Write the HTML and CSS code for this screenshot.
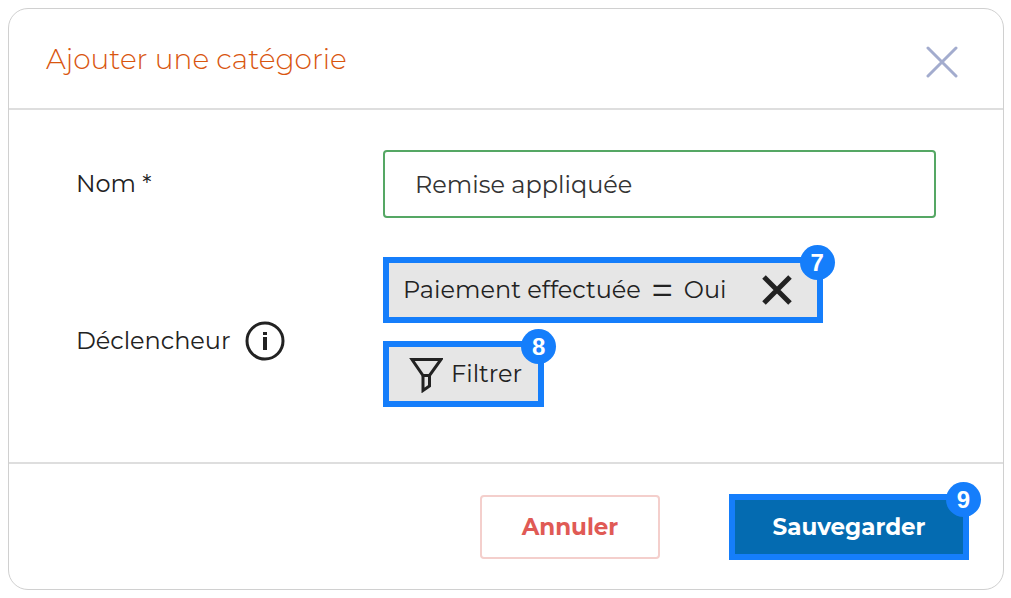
FILE: index.html
```html
<!DOCTYPE html>
<html lang="fr">
<head>
    <meta charset="UTF-8">
    <meta name="viewport" content="width=device-width, initial-scale=1.0">
    <title>Ajouter une catégorie</title>
    <link rel="stylesheet" href="styles.css">
</head>
<body>
    <form class="modal">
        <header class="modal-header">
            <h1 class="modal-title">Ajouter une catégorie</h1>
            <button type="button" class="icon-btn close-btn" aria-label="Fermer">
                <svg width="32" height="32" viewBox="0 0 32 32"><path d="M2 2L30 30M30 2L2 30" /></svg>
            </button>
        </header>

        <div class="modal-body">
            <label class="label" for="nom">Nom *</label>
            <input class="text-input" type="text" id="nom" value="Remise appliquée">

            <div class="label">
                <span>Déclencheur</span>
                <svg class="info-icon" width="40" height="40" viewBox="0 0 40 40">
                    <circle cx="20" cy="20" r="18" />
                    <path d="M20 16V29" />
                    <path d="M20 11V14" />
                </svg>
            </div>
            <div class="triggers">
                <div class="trigger highlight">
                    <span>Paiement effectuée</span>
                    <span class="operator">=</span>
                    <span>Oui</span>
                    <button type="button" class="icon-btn remove-btn" aria-label="Supprimer">
                        <svg width="30" height="30" viewBox="0 0 30 30"><path d="M2 2L28 28M28 2L2 28" /></svg>
                    </button>
                    <span class="badge">7</span>
                </div>
                <button type="button" class="filter-btn highlight">
                    <svg class="filter-icon" width="34" height="38" viewBox="0 0 34 38">
                        <path d="M3 4.500H32L20.500 20.500H14Z" />
                        <path d="M14 20.500V35.500L20.500 31V20.500" />
                    </svg>
                    Filtrer
                    <span class="badge">8</span>
                </button>
            </div>
        </div>

        <footer class="modal-footer">
            <button type="button" class="btn btn-cancel">Annuler</button>
            <button type="submit" class="btn btn-save highlight">Sauvegarder<span class="badge">9</span></button>
        </footer>
    </form>
</body>
</html>
```
FILE: styles.css
```css
* {
    margin: 0;
    padding: 0;
    box-sizing: border-box;
}

body {
    padding: 8px 7px 8px 8px;
    font-family: Montserrat, Inter, sans-serif;
    font-size: 24px;
    line-height: 32px;
    color: #222;
    background: #fff;
}

button,
input {
    font: inherit;
    color: inherit;
}

button {
    cursor: pointer;
}

svg {
    display: block;
    flex: none;
    fill: none;
    stroke: currentColor;
}

.modal {
    border: 1px solid #d0d0d0;
    border-radius: 20px;
}

/* Header */
.modal-header {
    display: flex;
    justify-content: space-between;
    align-items: center;
    padding: 32px 45px 30px 37px;
    border-bottom: 2px solid #dedede;
}

.modal-title {
    font-size: 28px;
    font-weight: 300;
    line-height: 37px;
    color: #d9560f;
}

.icon-btn {
    display: flex;
    border: none;
    background: none;
}

.close-btn {
    padding-top: 5px;
    color: #a3acce;
}

.close-btn svg {
    stroke-width: 3;
    stroke-linecap: round;
}

/* Body */
.modal-body {
    display: grid;
    grid-template-columns: 307px 1fr;
    align-items: center;
    row-gap: 39px;
    padding: 40px 67px 37px 67px;
}

.label {
    display: flex;
    align-items: center;
    gap: 14px;
}

.info-icon {
    stroke-width: 3;
}

.info-icon path {
    stroke-width: 4;
}

.text-input {
    width: 100%;
    height: 68px;
    padding: 0 30px;
    border: 2px solid #55a764;
    border-radius: 4px;
    color: #333;
    background: #fff;
    outline: none;
}

.triggers {
    display: flex;
    flex-direction: column;
    align-items: flex-start;
}

.highlight {
    position: relative;
    height: 66px;
    border: 6px solid #157efb;
}

.trigger,
.filter-btn {
    display: flex;
    align-items: center;
    margin-bottom: 18px;
    background: #e6e6e6;
}

.trigger {
    gap: 10px;
    padding: 0 25px 0 14px;
}

.operator {
    font-size: 40px;
}

.remove-btn {
    margin-left: 25px;
}

.remove-btn svg {
    stroke-width: 5;
}

.filter-btn {
    gap: 8px;
    padding: 0 16px 0 20px;
}

.filter-icon {
    stroke-width: 3;
}

.badge {
    position: absolute;
    top: -18px;
    right: -18px;
    width: 35px;
    height: 35px;
    border-radius: 50%;
    font-family: "Liberation Sans", Arial, sans-serif;
    font-size: 24px;
    font-weight: 700;
    line-height: 36px;
    text-align: center;
    color: #fff;
    background: #157efb;
}

/* Footer */
.modal-footer {
    display: flex;
    justify-content: flex-end;
    align-items: center;
    gap: 69px;
    padding: 30px 34px 29px;
    border-top: 2px solid #dedede;
}

.btn {
    font-size: 23px;
    font-weight: 700;
}

.btn-cancel {
    width: 180px;
    height: 64px;
    border: 2px solid #f4cfcc;
    border-radius: 4px;
    color: #e05a55;
    background: #fff;
}

.btn-save {
    width: 240px;
    color: #fff;
    background: #046bb1;
}
```
